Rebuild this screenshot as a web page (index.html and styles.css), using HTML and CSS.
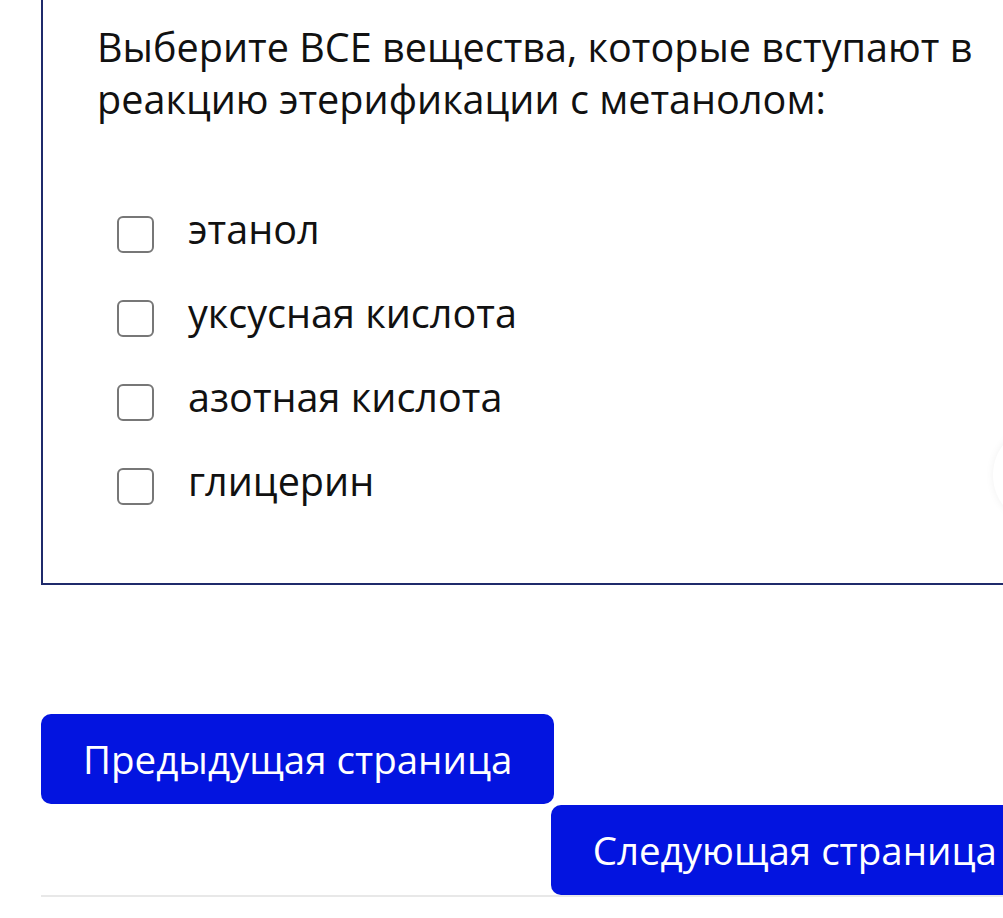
FILE: index.html
```html
<!DOCTYPE html>
<html lang="ru">
<head>
  <meta charset="UTF-8">
  <meta name="viewport" content="width=device-width, initial-scale=1.0">
  <title>Тест</title>
  <link rel="stylesheet" href="styles.css">
</head>
<body>
  <div class="page">
    <!-- вопрос -->
    <div class="question">
      <p class="question-text">Выберите ВСЕ вещества, которые вступают в реакцию этерификации с метанолом:</p>
      <div class="options">
        <label class="option"><input type="checkbox" class="check"><span>этанол</span></label>
        <label class="option"><input type="checkbox" class="check"><span>уксусная кислота</span></label>
        <label class="option"><input type="checkbox" class="check"><span>азотная кислота</span></label>
        <label class="option"><input type="checkbox" class="check"><span>глицерин</span></label>
      </div>
    </div>

    <!-- навигация -->
    <div class="nav">
      <button class="nav-button">Предыдущая страница</button>
      <button class="nav-button next">Следующая страница</button>
    </div>
  </div>

  <div class="float-button"></div>
</body>
</html>
```

FILE: styles.css
```css
html, body {
  overflow: hidden;
}
body {
  margin: 0;
  background: #fff;
  color: #111;
  font-family: "Open Sans", "Noto Sans", sans-serif;
  font-size: 39.6px;
}
.page {
  width: 998px;
  margin-left: 41px;
}
.question {
  border: 2px solid #1f2a6b;
  border-top: none;
  padding: 21px 54px 55px 54px;
}
.question-text {
  margin: 0;
  line-height: 52px;
}
.options {
  display: flex;
  flex-direction: column;
  margin-top: 67px;
  padding-left: 20px;
}
.option {
  display: flex;
  align-items: center;
  gap: 34px;
  height: 84px;
  line-height: 1;
}
.option span {
  margin-bottom: 9px;
}
.check {
  appearance: none;
  -webkit-appearance: none;
  margin: 0;
  width: 37px;
  height: 37px;
  border: 2px solid #777;
  border-radius: 6px;
  box-sizing: border-box;
  flex-shrink: 0;
}
.nav {
  display: flex;
  flex-wrap: wrap;
  row-gap: 1px;
  margin-top: 129px;
  border-bottom: 2px solid #e8e8e8;
}
.nav-button {
  font-family: inherit;
  font-size: 38.5px;
  line-height: 54px;
  padding: 18px 42px;
  border: none;
  border-radius: 10px;
  background: #0314e0;
  color: #fff;
  cursor: pointer;
}
.nav-button.next {
  margin-left: auto;
}
.float-button {
  position: absolute;
  left: 993px;
  top: 425px;
  width: 100px;
  height: 100px;
  border-radius: 50%;
  box-shadow: 0 0 8px rgba(0, 0, 0, 0.06);
}
```
